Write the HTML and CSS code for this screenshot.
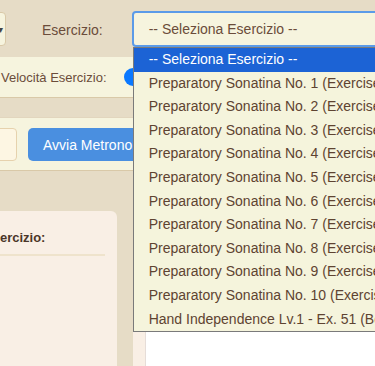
FILE: index.html
```html
<!DOCTYPE html>
<html lang="it">
<head>
    <meta charset="UTF-8">
    <meta name="viewport" content="width=device-width, initial-scale=1.0">
    <title>Metronomo Esercizi</title>
    <link rel="stylesheet" href="styles.css">
</head>
<body>

    <div class="page">
        <!-- Top toolbar -->
        <header class="top-bar">
            <div class="mode-select"><span class="arrow">&#9662;</span></div>
            <label class="field-label">Esercizio:</label>
            <div class="select-wrap">
                <div class="exercise-select">-- Seleziona Esercizio --</div>

                <!-- Open dropdown list -->
                <ul class="dropdown">
                    <li class="option active">-- Seleziona Esercizio --</li>
                    <li class="option">Preparatory Sonatina No. 1 (Exercise 1)</li>
                    <li class="option">Preparatory Sonatina No. 2 (Exercise 2)</li>
                    <li class="option">Preparatory Sonatina No. 3 (Exercise 3)</li>
                    <li class="option">Preparatory Sonatina No. 4 (Exercise 4)</li>
                    <li class="option">Preparatory Sonatina No. 5 (Exercise 5)</li>
                    <li class="option">Preparatory Sonatina No. 6 (Exercise 6)</li>
                    <li class="option">Preparatory Sonatina No. 7 (Exercise 7)</li>
                    <li class="option">Preparatory Sonatina No. 8 (Exercise 8)</li>
                    <li class="option">Preparatory Sonatina No. 9 (Exercise 9)</li>
                    <li class="option">Preparatory Sonatina No. 10 (Exercise 10)</li>
                    <li class="option">Hand Independence Lv.1 - Ex. 51 (Both Hands)</li>
                </ul>
            </div>
        </header>

        <!-- Controls -->
        <section class="controls">
            <div class="speed-row">
                <span class="speed-label">Velocità Esercizio:</span>
                <div class="slider"><span class="thumb"></span></div>
            </div>
            <div class="band"></div>
            <div class="action-row">
                <input class="bpm-input" type="text" value="">
                <button class="btn-start">Avvia Metronomo</button>
            </div>
        </section>

        <div class="divider-band"></div>

        <!-- Content -->
        <main class="content">
            <aside class="panel">
                <h3 class="panel-title">Esercizio:</h3>
                <hr class="panel-rule">
            </aside>
            <div class="sheet-wrap">
                <div class="sheet"></div>
            </div>
        </main>
    </div>

</body>
</html>
```

FILE: styles.css
```css
/* --- Basic Setup --- */
:root {
    --tan-bg: #e6dcc6;
    --cream-bg: #f6f4de;
    --panel-bg: #f9efe5;
    --text-brown: #6b4c3a;
    --line-color: #d9c9a8;
    --accent-blue: #4a8fe0;
    --highlight: #1c63d5;
}

body {
    margin: 0;
    font-family: "Liberation Sans", Arial, sans-serif;
    background-color: var(--tan-bg);
    color: var(--text-brown);
    overflow: hidden;
}

.page {
    width: 375px;
    height: 366px;
    overflow: hidden;
}

/* --- Top bar --- */
.top-bar {
    height: 57px;
    display: flex;
    align-items: flex-start;
    background-color: var(--tan-bg);
}

.top-bar > * {
    flex-shrink: 0;
}

.mode-select {
    width: 40px;
    height: 34px;
    margin-top: 12px;
    margin-left: -34px;
    box-sizing: border-box;
    border: 1px solid var(--line-color);
    border-radius: 4px;
    background-color: var(--cream-bg);
    display: flex;
    align-items: center;
    justify-content: flex-end;
    padding-right: 2px;
}

.mode-select .arrow {
    font-size: 10px;
    color: #444;
}

.field-label {
    margin-left: 36px;
    margin-top: 22px;
    font-size: 14px;
    line-height: 17px;
}

.select-wrap {
    position: relative;
    margin-left: 29px;
    margin-top: 11px;
}

.exercise-select {
    width: 300px;
    height: 36px;
    box-sizing: border-box;
    border: 2px solid #5b9be8;
    border-radius: 4px;
    background-color: var(--cream-bg);
    padding-left: 15px;
    font-size: 14px;
    line-height: 32px;
    color: var(--text-brown);
    white-space: nowrap;
}

/* --- Open dropdown --- */
.dropdown {
    position: absolute;
    top: 36px;
    left: 1px;
    width: 300px;
    margin: 0;
    padding: 0;
    list-style: none;
    background-color: #f5f4dc;
    border: 1px solid #7a7a7a;
    z-index: 10;
}

.option {
    height: 23.6px;
    line-height: 23.6px;
    padding-left: 15px;
    font-size: 14px;
    color: #5e4331;
    white-space: nowrap;
}

.option.active {
    background-color: var(--highlight);
    color: #ffffff;
}

/* --- Controls --- */
.controls {
    background-color: var(--cream-bg);
}

.speed-row {
    height: 40px;
    display: flex;
    align-items: center;
    border-bottom: 1px solid var(--line-color);
}

.speed-label {
    flex-shrink: 0;
    font-size: 13px;
    margin-left: 1px;
}

.slider {
    flex-shrink: 0;
    margin-left: 17px;
    width: 200px;
    height: 18px;
    display: flex;
    align-items: center;
}

.thumb {
    width: 18px;
    height: 18px;
    border-radius: 50%;
    background-color: #0a78ff;
}

.band {
    height: 19px;
    background-color: var(--tan-bg);
    border-bottom: 1px solid #e2d6be;
}

.action-row {
    display: flex;
    gap: 11px;
    padding: 10px 0 9px;
    border-bottom: 1px solid var(--line-color);
}

.bpm-input {
    flex-shrink: 0;
    width: 40px;
    height: 33px;
    margin-left: -23px;
    box-sizing: border-box;
    border: 1px solid #e6d2ad;
    border-radius: 4px;
    background-color: #fdf6e3;
}

.btn-start {
    flex-shrink: 0;
    height: 33px;
    padding: 0 15px;
    border: none;
    border-radius: 5px;
    background-color: var(--accent-blue);
    color: #ffffff;
    font-family: "Liberation Sans", Arial, sans-serif;
    font-size: 14px;
    white-space: nowrap;
}

.divider-band {
    height: 40px;
    background-color: var(--tan-bg);
}

/* --- Content --- */
.content {
    display: flex;
    gap: 16px;
    background-color: var(--tan-bg);
}

.panel {
    flex-shrink: 0;
    width: 137px;
    height: 200px;
    margin-left: -20px;
    padding: 12px 12px 0 20px;
    box-sizing: border-box;
    background-color: var(--panel-bg);
    border-radius: 0 6px 0 0;
}

.panel-title {
    margin: 7px 0 0 -16px;
    font-size: 13px;
    font-weight: bold;
    color: #4a3628;
}

.panel-rule {
    margin: 9px 0 0;
    border: none;
    border-top: 2px solid #efe3cc;
}

.sheet-wrap {
    flex: 1;
    padding-left: 12px;
    background-color: var(--panel-bg);
}

.sheet {
    height: 200px;
    background-color: #ffffff;
    border-left: 1px solid #e6ddd8;
}
```
